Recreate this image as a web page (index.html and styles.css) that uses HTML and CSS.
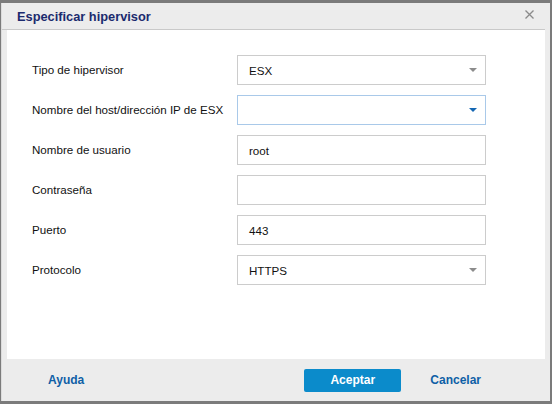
FILE: index.html
```html
<!DOCTYPE html>
<html lang="es">
<head>
<meta charset="utf-8">
<title>Especificar hipervisor</title>
<link rel="stylesheet" href="styles.css">
</head>
<body>
<div class="backdrop">
  <div class="dialog">
    <div class="titlebar">
      <span class="title">Especificar hipervisor</span>
      <svg class="close" width="9" height="9" viewBox="0 0 9 9"><path d="M0.5 0.5 L8.5 8.5 M8.5 0.5 L0.5 8.5" stroke="#8a8a8a" stroke-width="1.3" fill="none"/></svg>
    </div>
    <div class="content">
      <div class="row">
        <span class="label">Tipo de hipervisor</span>
        <div class="field select"><span>ESX</span><i class="arrow"></i></div>
      </div>
      <div class="row">
        <span class="label">Nombre del host/dirección IP de ESX</span>
        <div class="field select focused"><span></span><i class="arrow blue"></i></div>
      </div>
      <div class="row">
        <span class="label">Nombre de usuario</span>
        <div class="field"><span>root</span></div>
      </div>
      <div class="row">
        <span class="label">Contraseña</span>
        <div class="field"><span></span></div>
      </div>
      <div class="row">
        <span class="label">Puerto</span>
        <div class="field"><span>443</span></div>
      </div>
      <div class="row">
        <span class="label">Protocolo</span>
        <div class="field select"><span>HTTPS</span><i class="arrow"></i></div>
      </div>
    </div>
    <div class="footer">
      <a class="link help">Ayuda</a>
      <div class="actions">
        <button class="btn-primary">Aceptar</button>
        <a class="link cancel">Cancelar</a>
      </div>
    </div>
  </div>
</div>
</body>
</html>
```
FILE: styles.css
```css
* { box-sizing: border-box; }
html, body {
  margin: 0;
  padding: 0;
  width: 552px;
  height: 404px;
  overflow: hidden;
  background: #7b7b7b;
  font-family: "Liberation Sans", Arial, sans-serif;
}
.backdrop {
  width: 552px;
  height: 404px;
  padding: 3px 2px 3px 1px;
}
.dialog {
  width: 549px;
  height: 398px;
  background: #ececec;
  border-left: 1px solid #dcdcdc;
  display: flex;
  flex-direction: column;
}
.titlebar {
  height: 27px;
  display: flex;
  align-items: center;
  justify-content: space-between;
  padding: 0 11px 0 15px;
  border-bottom: 1px solid #c9c9c9;
  margin: 0 5px 0 0;
}
.title {
  font-size: 12.8px;
  font-weight: bold;
  color: #1b2a6e;
}
.close { display: block; margin-top: -3px; }
.content {
  height: 329px;
  margin: 0 5px 0 5px;
  background: #ffffff;
  padding: 25px 0 0 25px;
  display: flex;
  flex-direction: column;
  gap: 10px;
}
.row {
  display: flex;
  align-items: center;
  height: 30px;
}
.label {
  width: 205px;
  font-size: 11.6px;
  color: #111;
  margin-top: -2px;
}
.field {
  width: 249px;
  height: 30px;
  border: 1px solid #cccccc;
  display: flex;
  align-items: center;
  justify-content: space-between;
  padding: 0 8px 0 11px;
  font-size: 11.6px;
  color: #111;
  background: #fff;
}
.field.focused { border-color: #a9c9e9; }
.arrow {
  width: 0;
  height: 0;
  border-left: 4px solid transparent;
  border-right: 4px solid transparent;
  border-top: 4px solid #8c8c8c;
}
.arrow.blue { border-top-color: #1467b3; }
.footer {
  flex: 1;
  display: flex;
  align-items: center;
  justify-content: space-between;
  padding: 0 69px 0 46px;
}
.link {
  font-size: 12px;
  font-weight: bold;
  color: #0f5fa6;
  cursor: pointer;
}
.actions {
  display: flex;
  align-items: center;
  gap: 29px;
}
.btn-primary {
  width: 97px;
  height: 23px;
  border: none;
  border-radius: 2px;
  background: #0b8bcb;
  color: #fff;
  font-family: "Liberation Sans", Arial, sans-serif;
  font-size: 12px;
  font-weight: bold;
  padding: 0;
}
```
